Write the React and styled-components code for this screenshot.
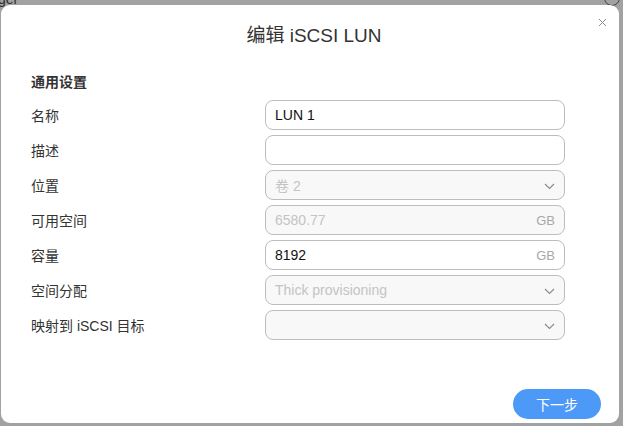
import React from "react";
import styled, { createGlobalStyle } from "styled-components";

const GlobalStyle = createGlobalStyle`
  html, body {
    margin: 0;
    padding: 0;
    background: #a2a2a2;
    font-family: "Liberation Sans", "Noto Sans CJK SC", sans-serif;
  }
`;

const rows = [
  { label: "名称", value: "LUN 1" },
  { label: "描述", value: "" },
  { label: "位置", value: "卷 2", disabled: true, select: true },
  { label: "可用空间", value: "6580.77", disabled: true, unit: "GB" },
  { label: "容量", value: "8192", unit: "GB" },
  { label: "空间分配", value: "Thick provisioning", disabled: true, select: true },
  { label: "映射到 iSCSI 目标", value: "", disabled: true, select: true },
];

function Chevron() {
  return (
    <svg width="11" height="7" viewBox="0 0 11 7">
      <path d="M1 1 L5.5 5.5 L10 1" fill="none" stroke="#8a8a8a" strokeWidth="1.1" />
    </svg>
  );
}

function App() {
  return (
    <>
      <GlobalStyle />
      <Backdrop>
        <BehindTitle>ger</BehindTitle>
        <BehindIcon />
        <Modal>
          <Close aria-label="close">
            <svg width="9" height="9" viewBox="0 0 9 9">
              <path d="M1 1 L8 8 M8 1 L1 8" stroke="#8c8c8c" strokeWidth="1" />
            </svg>
          </Close>
          <Title>编辑 iSCSI LUN</Title>
          <Form>
            <Section>通用设置</Section>
            {rows.map((r) => (
              <Row key={r.label}>
                <Label>{r.label}</Label>
                <Field $disabled={r.disabled}>
                  <Value $disabled={r.disabled}>{r.value}</Value>
                  {r.unit && <Unit>{r.unit}</Unit>}
                  {r.select && <Chevron />}
                </Field>
              </Row>
            ))}
          </Form>
          <Footer>
            <NextButton>下一步</NextButton>
          </Footer>
        </Modal>
      </Backdrop>
    </>
  );
}

export default App;

const Backdrop = styled.div`
  position: relative;
  height: 426px;
  box-sizing: border-box;
  padding: 5px 4px 3px 1px;
  display: flex;
  overflow: hidden;
`;

const BehindTitle = styled.span`
  position: absolute;
  left: -2px;
  top: -9px;
  font-size: 14px;
  color: #2e2e2e;
`;

const BehindIcon = styled.span`
  position: absolute;
  right: 3px;
  top: -10px;
  width: 14px;
  height: 14px;
  border: 1px solid #444;
  border-radius: 50%;
`;

const Modal = styled.div`
  position: relative;
  flex: 1;
  background: #fff;
  border-radius: 9px;
  display: flex;
  flex-direction: column;
  padding: 0 54px 0 30px;
`;

const Close = styled.button`
  position: absolute;
  top: 13px;
  right: 12px;
  border: 0;
  background: none;
  padding: 0;
  line-height: 0;
  cursor: pointer;
`;

const Title = styled.h1`
  margin: 19px 0 0 32px;
  font-size: 19px;
  font-weight: normal;
  color: #333;
  text-align: center;
  line-height: 24px;
`;

const Form = styled.div`
  margin-top: 24px;
  display: flex;
  flex-direction: column;
  gap: 5px;
`;

const Section = styled.div`
  font-size: 14px;
  font-weight: bold;
  color: #333;
  line-height: 20px;
  margin-bottom: 3px;
`;

const Row = styled.div`
  display: grid;
  grid-template-columns: 234px 1fr;
  align-items: center;
  height: 30px;
`;

const Label = styled.div`
  font-size: 14px;
  color: #333;
`;

const Field = styled.div`
  height: 30px;
  box-sizing: border-box;
  border: 1px solid #bdbdbd;
  border-radius: 8px;
  background: ${(p) => (p.$disabled ? "#f8f8f8" : "#fff")};
  display: flex;
  align-items: center;
  padding: 0 9px 0 9px;
  gap: 6px;

  svg {
    margin-top: 3px;
  }
`;

const Value = styled.span`
  flex: 1;
  font-size: 14px;
  color: ${(p) => (p.$disabled ? "#c4c4c4" : "#111")};
`;

const Unit = styled.span`
  font-size: 13px;
  color: #a8a8a8;
`;

const Footer = styled.div`
  margin-top: auto;
  margin-right: -36px;
  margin-bottom: 4px;
  display: flex;
  justify-content: flex-end;
`;

const NextButton = styled.button`
  width: 88px;
  height: 30px;
  border: 0;
  border-radius: 15px;
  background: #4d99f8;
  color: #fff;
  font-family: inherit;
  font-size: 14px;
  cursor: pointer;
`;
